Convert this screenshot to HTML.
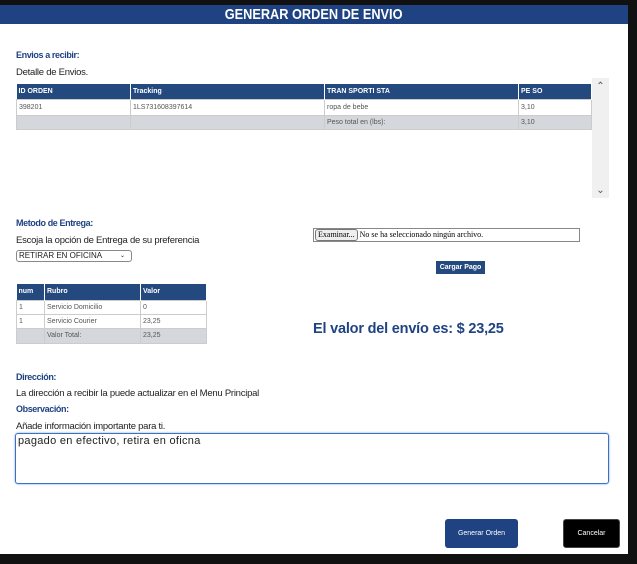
<!DOCTYPE html>
<html><head><meta charset="utf-8"><style>
*{margin:0;padding:0;box-sizing:border-box}
body{width:637px;height:564px;background:#111;position:relative;overflow:hidden;font-family:"Liberation Sans",sans-serif}
.modal{position:absolute;left:0;top:5px;width:628px;height:549px;background:#fff}
.hdr{position:absolute;left:0;top:0;width:628px;height:19px;background:#1f4282;color:#fff;text-align:center;font-weight:bold;font-size:15px;line-height:19px}
.hdr span{display:inline-block;transform:scaleX(0.85)}
.abs{position:absolute}
.lbl{color:#1f4282;font-weight:bold;font-size:9px;letter-spacing:-0.4px}
.txt{font-size:9.5px;color:#222;letter-spacing:-0.25px}
table{border-collapse:collapse;font-size:7px;position:absolute}
th{background:#24497f;color:#fff;text-align:left;font-weight:bold;padding:0 2px;border-right:1px solid #fff}
td{color:#555;padding:0 2px;border:1px solid #ccc}
tr.tot td{background:#d4d7dc}
</style></head><body>
<div class="modal">
<div class="hdr"><span>GENERAR ORDEN DE ENVIO</span></div>
<div class="abs lbl" style="left:16px;top:45px">Envios a recibir:</div>
<div class="abs txt" style="left:16px;top:62px">Detalle de Envios.</div>
<table style="left:16px;top:79px;width:576px">
<tr style="height:15px"><th style="width:114px">ID ORDEN</th><th style="width:194px">Tracking</th><th style="width:194px">TRAN SPORTI STA</th><th>PE SO</th></tr>
<tr style="height:16px"><td>398201</td><td>1LS731608397614</td><td>ropa de bebe</td><td>3,10</td></tr>
<tr class="tot" style="height:14px"><td></td><td></td><td>Peso total en (lbs):</td><td>3,10</td></tr>
</table>
<div class="abs" style="left:592px;top:73px;width:17px;height:120px;background:#f0f0f0;font-size:10px;color:#555;text-align:center">
<div style="margin-top:3px">&#8963;</div><div style="position:absolute;bottom:2px;width:17px">&#8964;</div></div>
<div class="abs lbl" style="left:16px;top:213px">Metodo de Entrega:</div>
<div class="abs txt" style="left:16px;top:230px">Escoja la opción de Entrega de su preferencia</div>
<div class="abs" style="left:16px;top:245px;width:116px;height:12px;border:1px solid #888;border-radius:3px;font-size:8px;line-height:10px;padding-left:2px;color:#222">RETIRAR EN OFICINA<span style="position:absolute;right:6px;font-size:6px">&#8964;</span></div>
<table style="left:16px;top:279px;width:191px">
<tr style="height:16px"><th style="width:28px">num</th><th style="width:96px">Rubro</th><th>Valor</th></tr>
<tr style="height:14px"><td>1</td><td>Servicio Domicilio</td><td>0</td></tr>
<tr style="height:14px"><td>1</td><td>Servicio Courier</td><td>23,25</td></tr>
<tr class="tot" style="height:15px"><td></td><td>Valor Total:</td><td>23,25</td></tr>
</table>
<div class="abs" style="left:313px;top:223px;width:267px;height:14px;border:1px solid #888;font-family:'Liberation Serif',serif;font-size:8px;line-height:12px">
<span style="display:inline-block;border:1px solid #777;border-radius:3px;background:#eee;padding:0 2px;margin-left:1px;line-height:10px">Examinar...</span> No se ha seleccionado ningún archivo.</div>
<div class="abs" style="left:436px;top:256px;width:49px;height:13px;background:#24497f;color:#fff;font-size:7px;font-weight:bold;text-align:center;line-height:13px">Cargar Pago</div>
<div class="abs" style="left:313px;top:316px;color:#1f4282;font-size:14.5px;font-weight:bold;letter-spacing:-0.2px">El valor del envío es: $ 23,25</div>
<div class="abs lbl" style="left:16px;top:367px">Dirección:</div>
<div class="abs txt" style="left:16px;top:383px">La dirección a recibir la puede actualizar en el Menu Principal</div>
<div class="abs lbl" style="left:16px;top:399px">Observación:</div>
<div class="abs txt" style="left:16px;top:416px">Añade información importante para ti.</div>
<div class="abs" style="left:15px;top:428px;width:594px;height:51px;border:1px solid #3d6fc2;border-radius:3px;box-shadow:0 0 2px #7aa0e0;font-size:11px;letter-spacing:0.3px;padding:1px 2px;color:#222">pagado en efectivo, retira en oficna</div>
<div class="abs" style="left:445px;top:514px;width:73px;height:29px;background:#1f4282;border-radius:3px;color:#fff;font-size:7px;text-align:center;line-height:29px">Generar Orden</div>
<div class="abs" style="left:563px;top:514px;width:57px;height:29px;background:#000;border:1px solid #444;border-radius:3px;color:#fff;font-size:7px;text-align:center;line-height:27px">Cancelar</div>
</div>
</body></html>
